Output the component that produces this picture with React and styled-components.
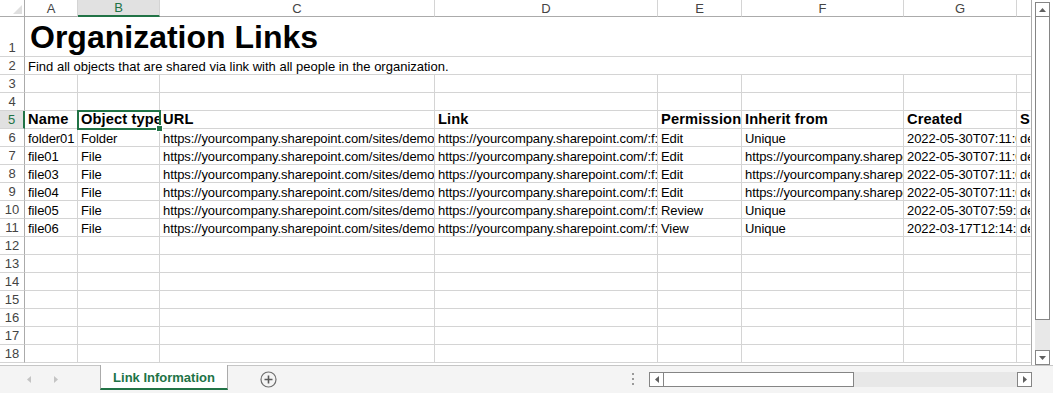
import styled, { createGlobalStyle } from "styled-components";

const GREEN = "#217346";
const GRID = "#d4d4d4";
const FRAME = "#ababab";

const COLS = [
  { key: "A", width: 53 },
  { key: "B", width: 82 },
  { key: "C", width: 275 },
  { key: "D", width: 223 },
  { key: "E", width: 84 },
  { key: "F", width: 162 },
  { key: "G", width: 113 },
  { key: "H", width: 14 },
];

const URL_C = "https://yourcompany.sharepoint.com/sites/demo/Shared Documents/folder01";
const URL_D = "https://yourcompany.sharepoint.com/:f:/s/demo/EkR8tVqPzJ";
const INHERIT = "https://yourcompany.sharepoint.com/sites/demo/Shared Documents";

const headers = ["Name", "Object type", "URL", "Link", "Permission", "Inherit from", "Created", "Shared by"];

const rows = [
  ["folder01", "Folder", URL_C, URL_D, "Edit", "Unique", "2022-05-30T07:11:05Z", "demo@yourcompany.com"],
  ["file01", "File", URL_C + "/file01.docx", URL_D, "Edit", INHERIT, "2022-05-30T07:11:05Z", "demo@yourcompany.com"],
  ["file03", "File", URL_C + "/file03.docx", URL_D, "Edit", INHERIT, "2022-05-30T07:11:05Z", "demo@yourcompany.com"],
  ["file04", "File", URL_C + "/file04.docx", URL_D, "Edit", INHERIT, "2022-05-30T07:11:05Z", "demo@yourcompany.com"],
  ["file05", "File", URL_C + "/file05.docx", URL_D, "Review", "Unique", "2022-05-30T07:59:12Z", "demo@yourcompany.com"],
  ["file06", "File", URL_C + "/file06.docx", URL_D, "View", "Unique", "2022-03-17T12:14:53Z", "demo@yourcompany.com"],
];

const GlobalStyle = createGlobalStyle`
  body {
    margin: 0;
    font-family: "Liberation Sans", Arial, sans-serif;
    background: #ffffff;
  }
`;

const Window = styled.div`
  width: 1053px;
  height: 393px;
  display: flex;
  flex-direction: column;
  overflow: hidden;
  background: #ffffff;
`;

const Main = styled.div`
  height: 365px;
  display: flex;
`;

const Sheet = styled.div`
  display: grid;
  grid-template-columns: 25px ${COLS.map((c) => c.width + "px").join(" ")};
  grid-template-rows: 17px 40px repeat(17, 18px);
  align-content: start;
  width: 1032px;
  border-right: 1px solid ${FRAME};
  box-sizing: border-box;
`;

const Corner = styled.div`
  border-right: 1px solid ${FRAME};
  border-bottom: 1px solid ${FRAME};
  display: flex;
  align-items: flex-end;
  justify-content: flex-end;
  padding: 0 2px 2px 0;
`;

const ColHead = styled.div`
  box-sizing: border-box;
  border-right: 1px solid ${(p) => (p.$last ? "transparent" : GRID)};
  border-bottom: ${(p) => (p.$active ? `2px solid ${GREEN}` : `1px solid ${FRAME}`)};
  background: ${(p) => (p.$active ? "#e1e1e1" : "#ffffff")};
  color: ${(p) => (p.$active ? GREEN : "#444444")};
  font-size: 13px;
  display: flex;
  align-items: center;
  justify-content: center;
  overflow: hidden;
`;

const RowHead = styled.div`
  box-sizing: border-box;
  border-right: ${(p) => (p.$active ? `2px solid ${GREEN}` : `1px solid ${FRAME}`)};
  border-bottom: 1px solid ${GRID};
  background: ${(p) => (p.$active ? "#e1e1e1" : "#ffffff")};
  color: ${(p) => (p.$active ? GREEN : "#444444")};
  font-size: 13px;
  line-height: 15px;
  display: flex;
  align-items: flex-end;
  justify-content: center;
  padding-bottom: 1px;
`;

const Cell = styled.div`
  position: relative;
  box-sizing: border-box;
  border-right: 1px solid ${(p) => (p.$last ? "transparent" : GRID)};
  border-bottom: 1px solid ${GRID};
  display: flex;
  align-items: flex-end;
  min-width: 0;
  outline: ${(p) => (p.$selected ? `2px solid ${GREEN}` : "none")};
  outline-offset: -1px;
  z-index: ${(p) => (p.$selected ? 2 : "auto")};
`;

const CellText = styled.span`
  display: block;
  flex: 1;
  min-width: 0;
  overflow: hidden;
  white-space: nowrap;
  padding-left: 3px;
  color: #000000;
  font-size: ${(p) => (p.$bold ? "14.67px" : "13px")};
  font-weight: ${(p) => (p.$bold ? 700 : 400)};
  letter-spacing: ${(p) => (p.$bold ? "0.12px" : "-0.08px")};
  line-height: ${(p) => (p.$bold ? "17px" : "15px")};
`;

const MergedCell = styled.div`
  grid-column: 2 / -1;
  border-bottom: 1px solid ${GRID};
  display: flex;
  align-items: flex-end;
  padding-left: ${(p) => p.$indent}px;
  white-space: nowrap;
  overflow: hidden;
`;

const Title = styled.span`
  font-size: 32px;
  font-weight: 700;
  color: #000000;
  line-height: 37px;
`;

const Subtitle = styled.span`
  font-size: 13px;
  color: #000000;
  line-height: 15px;
`;

const FillHandle = styled.span`
  position: absolute;
  right: -4px;
  bottom: -4px;
  width: 5px;
  height: 5px;
  background: ${GREEN};
  border: 1px solid #ffffff;
`;

const VScroll = styled.div`
  width: 15px;
  margin: 2px 0 0 3px;
  display: flex;
  flex-direction: column;
  background: #e8e8e8;
`;

const ScrollButton = styled.div`
  box-sizing: border-box;
  width: 15px;
  height: 15px;
  flex: none;
  border: 1px solid #858585;
  background: #ffffff;
  display: flex;
  align-items: center;
  justify-content: center;
`;

const VThumb = styled.div`
  box-sizing: border-box;
  height: 303px;
  flex: none;
  border: 1px solid #858585;
  border-top: none;
  background: #ffffff;
`;

const Track = styled.div`
  flex: 1;
  background: #e8e8e8;
`;

const TabBar = styled.div`
  height: 28px;
  box-sizing: border-box;
  border-top: 1px solid #c6c6c6;
  background: #f4f4f4;
  display: flex;
  align-items: flex-start;
  padding-right: 21px;
`;

const NavArea = styled.div`
  width: 100px;
  height: 27px;
  display: flex;
  align-items: center;
  padding-left: 27px;
  gap: 23px;
  box-sizing: border-box;
`;

const Tab = styled.div`
  box-sizing: border-box;
  width: 128px;
  height: 25px;
  margin-top: -1px;
  background: #ffffff;
  border-left: 1px solid ${FRAME};
  border-right: 1px solid ${FRAME};
  border-bottom: 2px solid ${GREEN};
  color: ${GREEN};
  font-size: 13px;
  font-weight: 700;
  display: flex;
  align-items: center;
  justify-content: center;
  padding-top: 2px;
`;

const AddButton = styled.div`
  margin: 5px 0 0 32px;
  width: 17px;
  height: 17px;
  display: flex;
`;

const Spacer = styled.div`
  flex: 1;
`;

const Dots = styled.div`
  margin-top: 7px;
  display: flex;
  flex-direction: column;
  gap: 3px;
  & > span {
    width: 2px;
    height: 2px;
    background: #9a9a9a;
  }
`;

const HScroll = styled.div`
  margin: 6px 0 0 15px;
  width: 383px;
  height: 15px;
  display: flex;
  background: #e8e8e8;
`;

const HThumb = styled.div`
  box-sizing: border-box;
  width: 190px;
  border: 1px solid #858585;
  border-left: none;
  background: #ffffff;
`;

const Arrow = ({ dir, color = "#606060", size = 7 }) => {
  const pts = {
    up: "0,4 3.5,0 7,4",
    down: "0,0 7,0 3.5,4",
    left: "4,0 4,7 0,3.5",
    right: "0,0 4,3.5 0,7",
  }[dir];
  const vertical = dir === "up" || dir === "down";
  return (
    <svg width={vertical ? size : 4} height={vertical ? 4 : size} viewBox={vertical ? "0 0 7 4" : "0 0 4 7"}>
      <polygon points={pts} fill={color} />
    </svg>
  );
};

export default function App() {
  const selRow = 5;
  const selCol = "B";

  const renderRow = (num, values = [], bold = false) => [
    <RowHead key={`rh${num}`} $active={num === selRow}>
      {num}
    </RowHead>,
    ...COLS.map((c, i) => {
      const selected = num === selRow && c.key === selCol;
      return (
        <Cell key={`${num}${c.key}`} $last={i === COLS.length - 1} $selected={selected}>
          <CellText $bold={bold}>{values[i] || ""}</CellText>
          {selected && <FillHandle />}
        </Cell>
      );
    }),
  ];

  return (
    <>
      <GlobalStyle />
      <Window>
        <Main>
          <Sheet>
            <Corner>
              <svg width="9" height="9" viewBox="0 0 9 9">
                <polygon points="9,0 9,9 0,9" fill="#dfdfdf" />
              </svg>
            </Corner>
            {COLS.map((c, i) => (
              <ColHead key={c.key} $active={c.key === selCol} $last={i === COLS.length - 1}>
                {c.key === "H" ? "" : c.key}
              </ColHead>
            ))}

            <RowHead>1</RowHead>
            <MergedCell $indent={5}>
              <Title>Organization Links</Title>
            </MergedCell>

            <RowHead>2</RowHead>
            <MergedCell $indent={3}>
              <Subtitle>Find all objects that are shared via link with all people in the organization.</Subtitle>
            </MergedCell>

            {renderRow(3)}
            {renderRow(4)}
            {renderRow(5, headers, true)}
            {rows.map((r, i) => renderRow(6 + i, r))}
            {[12, 13, 14, 15, 16, 17, 18].map((n) => renderRow(n))}
          </Sheet>

          <VScroll>
            <ScrollButton>
              <Arrow dir="up" />
            </ScrollButton>
            <VThumb />
            <Track />
            <ScrollButton>
              <Arrow dir="down" />
            </ScrollButton>
          </VScroll>
        </Main>

        <TabBar>
          <NavArea>
            <Arrow dir="left" color="#c4c4c4" />
            <Arrow dir="right" color="#c4c4c4" />
          </NavArea>
          <Tab>Link Information</Tab>
          <AddButton>
            <svg width="17" height="17" viewBox="0 0 17 17">
              <circle cx="8.5" cy="8.5" r="7.5" fill="none" stroke="#6f6f6f" strokeWidth="1.2" />
              <path d="M8.5 4.5v8M4.5 8.5h8" stroke="#5a5a5a" strokeWidth="1.6" />
            </svg>
          </AddButton>
          <Spacer />
          <Dots>
            <span />
            <span />
            <span />
          </Dots>
          <HScroll>
            <ScrollButton>
              <Arrow dir="left" />
            </ScrollButton>
            <HThumb />
            <Track />
            <ScrollButton>
              <Arrow dir="right" />
            </ScrollButton>
          </HScroll>
        </TabBar>
      </Window>
    </>
  );
}
